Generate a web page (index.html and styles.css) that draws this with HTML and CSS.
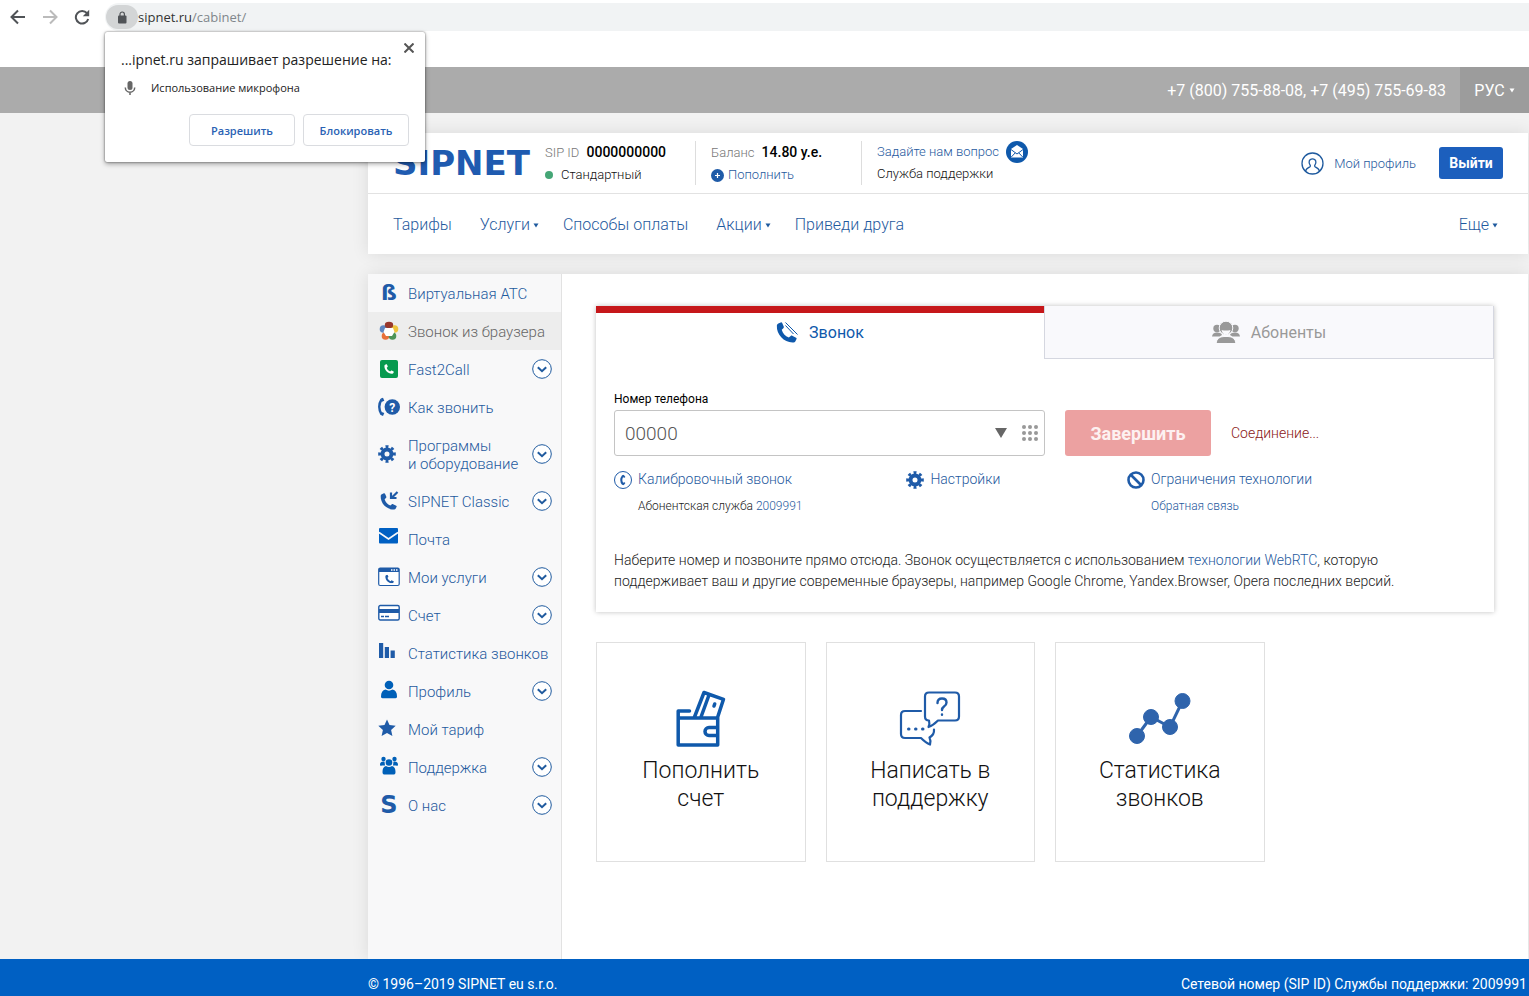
FILE: index.html
```html
<!DOCTYPE html>
<html lang="ru">
<head>
<meta charset="utf-8">
<meta name="viewport" content="width=device-width, initial-scale=1">
<title>SIPNET</title>
<link rel="stylesheet" href="styles.css">
</head>
<body>
<svg class="defs" aria-hidden="true">
  <symbol id="handset" viewBox="0 0 22 22"><path d="M2.4 1.6 5 .4c.7-.2 1.200 0 1.500.6l1.700 4c.2.7 0 1.200-.5 1.600L6 8.200c1 3.800 3.600 6.700 7.400 8.100l2-1.700c.5-.4 1-.5 1.600-.2l4 2c.7.4.8.9.5 1.500l-1.300 2.400c-.4.700-1 1-1.900 1.100C8.800 22 .4 13.500.9 4c.1-1.200.5-1.900 1.500-2.400z" fill="currentColor"/></symbol>
  <symbol id="gear" viewBox="0 0 20 20"><g fill="none" stroke="currentColor"><circle cx="10" cy="10" r="5" stroke-width="4.400"/><circle cx="10" cy="10" r="8.200" stroke-width="3.200" pathLength="16" stroke-dasharray="1 1" stroke-dashoffset=".5"/></g></symbol>
  <symbol id="expand" viewBox="0 0 20 20"><circle cx="10" cy="10" r="9.300" fill="#fff" stroke="currentColor"/><path d="m5.800 8.200 4.200 4 4.200-4" fill="none" stroke="currentColor" stroke-width="2"/></symbol>
  <symbol id="caret" viewBox="0 0 6 5"><path d="M.5.5h5L3 4.500z" fill="currentColor"/></symbol>
</svg>

<div class="browser">
  <div class="browser-nav">
    <button type="button" aria-label="Назад"><svg width="16" height="16" viewBox="0 0 16 16"><path d="M15 8H2M8 1.500 1.500 8 8 14.500" fill="none" stroke="currentColor" stroke-width="2"/></svg></button>
    <button type="button" class="is-off" aria-label="Вперёд"><svg width="16" height="16" viewBox="0 0 16 16"><path d="M1 8h13M8 1.500 14.500 8 8 14.500" fill="none" stroke="currentColor" stroke-width="2"/></svg></button>
    <button type="button" aria-label="Обновить"><svg width="16" height="16" viewBox="0 0 16 16"><path d="M13 4.200A6.300 6.300 0 1 0 14.200 10" fill="none" stroke="currentColor" stroke-width="2"/><path d="M15.200.8v6.400H8.800z" fill="currentColor"/></svg></button>
  </div>
  <div class="address">
    <span class="lock"><svg width="10" height="13" viewBox="0 0 10 13"><rect x="1" y="4.500" width="8.500" height="8" rx="1" fill="currentColor"/><path d="M3 5V3.200a2.200 2.200 0 0 1 4.400 0V5" fill="none" stroke="currentColor" stroke-width="1.200"/></svg></span>
    <span class="host">sipnet.ru</span><span class="path">/cabinet/</span>
  </div>
</div>

<div class="permission" role="dialog" aria-labelledby="perm-title">
  <button type="button" class="permission-close" aria-label="Закрыть"><svg width="10" height="10" viewBox="0 0 10 10"><path d="m.5.5 9 9m0-9-9 9" stroke="currentColor" stroke-width="2"/></svg></button>
  <p class="permission-title" id="perm-title">...ipnet.ru запрашивает разрешение на:</p>
  <p class="permission-item"><svg width="12" height="16" viewBox="0 0 12 16"><rect x="3.500" y="1" width="5" height="9" rx="2.500" fill="currentColor"/><path d="M1.300 7.500a4.700 4.700 0 0 0 9.400 0M6 12v3" fill="none" stroke="currentColor" stroke-width="1.500"/></svg>Использование микрофона</p>
  <div class="permission-actions">
    <button type="button">Разрешить</button>
    <button type="button">Блокировать</button>
  </div>
</div>

<div class="topbar">
  <span class="phones">+7 (800) 755-88-08, +7 (495) 755-69-83</span>
  <button type="button" class="lang">РУС <svg class="caret"><use href="#caret"/></svg></button>
</div>

<div class="page">
  <header class="header">
    <div class="account">
      <a class="logo" href="#">SIPNET</a>
      <div class="info info-id">
        <div><span class="muted">SIP ID</span> <b>0000000000</b></div>
        <div class="plan">Стандартный</div>
      </div>
      <div class="info info-balance">
        <div><span class="muted">Баланс</span> <b>14.80 у.е.</b></div>
        <a class="topup" href="#"><svg width="13" height="13" viewBox="0 0 13 13"><circle cx="6.500" cy="6.500" r="6.500" fill="#1f5ba8"/><path d="M6.500 4v5M4 6.500h5" stroke="#fff" stroke-width="1.200"/></svg>Пополнить</a>
      </div>
      <div class="info info-help">
        <a class="ask" href="#">Задайте нам вопрос<svg width="22" height="22" viewBox="0 0 22 22"><circle cx="11" cy="11" r="11" fill="#0f59ab"/><path d="M5 8 11 4l6 4v8.500H5z" fill="#fff"/><path d="m5 8.500 6 4.500 6-4.500M5 16.300l4.300-4.500m7.700 4.500-4.300-4.500" fill="none" stroke="#0f59ab"/></svg></a>
        <div>Служба поддержки</div>
      </div>
      <a class="profile" href="#"><svg width="23" height="23" viewBox="0 0 23 23" fill="none" stroke="currentColor" stroke-width="1.300"><circle cx="11.500" cy="11.500" r="10.500"/><path d="M4.500 19.200c.5-2 1.700-3.200 4.300-4.300.7-.4.7-1.300.2-2-1.600-2.300-1.200-6 2.500-6s4.100 3.700 2.500 6c-.5.7-.5 1.600.2 2 2.600 1.100 3.800 2.300 4.300 4.300"/></svg>Мой профиль</a>
      <button type="button" class="logout">Выйти</button>
    </div>
    <nav class="menu">
      <a href="#">Тарифы</a>
      <button type="button">Услуги<svg class="caret"><use href="#caret"/></svg></button>
      <a href="#">Способы оплаты</a>
      <button type="button">Акции<svg class="caret"><use href="#caret"/></svg></button>
      <a href="#">Приведи друга</a>
      <button type="button" class="more">Еще<svg class="caret"><use href="#caret"/></svg></button>
    </nav>
  </header>

  <div class="body">
    <nav class="side">
      <a href="#"><span class="icon beta">ß</span>Виртуальная АТС</a>
      <a href="#" class="is-active"><svg class="icon" viewBox="0 0 22 22"><circle cx="5.500" cy="9" r="3.800" fill="#5d86c1"/><circle cx="16.500" cy="9" r="3.800" fill="#eec43c"/><circle cx="7.500" cy="16" r="3.800" fill="#e8703a"/><circle cx="14.500" cy="16" r="3.800" fill="#4d9457"/><ellipse cx="11" cy="5" rx="4.200" ry="3.300" fill="#98382c"/><path d="M7 8h8l1.500 4-2.500 4H8l-2.500-4z" fill="#fff"/></svg>Звонок из браузера</a>
      <a href="#"><svg class="icon" viewBox="0 0 22 22"><rect x="2" y="2" width="18" height="18" rx="2" fill="#079a4f"/><svg x="6" y="6" width="10" height="10" color="#fff"><use href="#handset"/></svg></svg>Fast2Call<svg class="expand"><use href="#expand"/></svg></a>
      <a href="#"><svg class="icon" viewBox="0 0 22 22"><path d="M3.500 3.500Q-1 10.500 3.500 18.500" fill="none" stroke="#1f5ba8" stroke-width="2.400"/><path d="m2.800 2.600 2.200-.8 1.300 3-2.300 1M2.800 19l2.200 1 1.300-3-2.600-1" fill="#1f5ba8"/><circle cx="14.300" cy="11" r="7.700" fill="#1f5ba8"/><text x="14.300" y="15.500" text-anchor="middle" class="glyph">?</text></svg>Как звонить</a>
      <a href="#"><svg class="icon" viewBox="1 0 22 22"><svg x="1" y="2" width="18" height="18"><use href="#gear"/></svg></svg>Программы<br>и оборудование<svg class="expand"><use href="#expand"/></svg></a>
      <a href="#"><svg class="icon" viewBox="0 0 22 22"><svg x="2" y="3" width="17" height="17"><use href="#handset"/></svg><path d="M19.500 2 14 7.500M13 2.500V8h5.500" fill="none" stroke="currentColor" stroke-width="2.200"/></svg>SIPNET Classic<svg class="expand"><use href="#expand"/></svg></a>
      <a href="#"><svg class="icon" viewBox="0 0 22 22"><rect x="1" y="0" width="19" height="15.500" rx="1" fill="#0060c3"/><path d="m1 4.500 9.500 6.500L20 4.500" fill="none" stroke="#f8f8f9" stroke-width="1.600"/></svg>Почта</a>
      <a href="#"><svg class="icon" viewBox="0 0 22 22"><rect x=".7" y="2" width="20.500" height="17.500" rx="1.500" fill="#fff" stroke="currentColor" stroke-width="1.200"/><path d="M1 2h20v4H1z" fill="currentColor"/><path d="M13 4h1.500m1 0H17m1 0h1.500" stroke="#fff" stroke-width="1.500"/><svg x="7" y="8.500" width="9" height="9"><use href="#handset"/></svg></svg>Мои услуги<svg class="expand"><use href="#expand"/></svg></a>
      <a href="#"><svg class="icon" viewBox="0 0 22 22"><rect x=".8" y="1.500" width="20.400" height="14.500" rx="1.500" fill="#fff" stroke="currentColor" stroke-width="1.400"/><path d="M1 5h20v4H1z" fill="currentColor"/><path d="M3 12.500h3m1 0h4" stroke="currentColor" stroke-width="1.400"/></svg>Счет<svg class="expand"><use href="#expand"/></svg></a>
      <a href="#"><svg class="icon" viewBox="0 0 22 22"><path d="M1 1h4.200v15H1zM6.800 5H11v11H6.800zM12.600 8.500h4.200V16h-4.200z" fill="currentColor"/></svg>Статистика звонков</a>
      <a href="#"><svg class="icon" viewBox="0 0 22 22"><circle cx="11" cy="5" r="4.300" fill="#0060b8"/><path d="M3 16.500c0-4 1.500-6.500 4.500-7q3.500 2.300 7 0c3 .5 4.500 3 4.500 7 0 1-.5 1.700-1.500 1.700h-13c-1 0-1.500-.7-1.500-1.700z" fill="#0060b8"/></svg>Профиль<svg class="expand"><use href="#expand"/></svg></a>
      <a href="#"><svg class="icon" viewBox="0 0 22 22"><path d="m9 1.500 2.500 5.600 6.200.7-4.600 4.100 1.300 6.100L9 14.900 3.600 18l1.300-6.100L.3 7.800l6.200-.7z" fill="currentColor"/></svg>Мой тариф</a>
      <a href="#"><svg class="icon" viewBox="0 0 22 22" fill="#0060b8"><circle cx="5.500" cy="3" r="2.200"/><circle cx="16.500" cy="3" r="2.200"/><path d="M2 9c0-3 1.500-4 4.500-3.500L7 9.500H4C2.500 10 2 9.800 2 9zM20 9c0-3-1.500-4-4.500-3.500l-.5 4h3c1.500.5 2 .3 2-.5z"/><circle cx="11" cy="6.500" r="3.300"/><path d="M4.500 16c0-3.500 1-5.500 3.500-6q3 2 6 0c2.500.5 3.500 2.500 3.500 6 0 1.500-.5 2.500-1.500 2.500H6c-1 0-1.500-1-1.500-2.500z"/></svg>Поддержка<svg class="expand"><use href="#expand"/></svg></a>
      <a href="#"><span class="icon letter">S</span>О нас<svg class="expand"><use href="#expand"/></svg></a>
    </nav>

    <main class="content">
      <section class="call">
        <div class="tabs" role="tablist">
          <button type="button" role="tab" aria-selected="true" class="tab is-current"><svg width="22" height="22" viewBox="0 0 22 22"><svg width="21" height="21"><use href="#handset"/></svg><path d="m9.500 3.500 8 8.500M9.500.5l12 12" stroke="currentColor"/></svg>Звонок</button>
          <button type="button" role="tab" aria-selected="false" class="tab"><svg width="28" height="22" viewBox="0 0 28 22" fill="currentColor"><circle cx="5" cy="7.500" r="3.700"/><circle cx="23" cy="7.500" r="3.700"/><path d="M0 15.500q.5-4 5-4t5 2.500l-2.500 1.500zM28 15.500q-.5-4-5-4t-5 2.500l2.500 1.500z"/><circle cx="14" cy="7" r="6.800" stroke="#f9f9fc"/><path d="M4 22.500q1-7 8-7h4q7 0 8 7z" stroke="#f9f9fc"/><path d="M9.500 9q4.500 1 9 0-1 4.500-4.500 4.500T9.500 9z" fill="#f9f9fc"/></svg>Абоненты</button>
        </div>
        <div class="call-body">
          <label class="field-label" for="number">Номер телефона</label>
          <div class="dial">
            <div class="field">
              <input id="number" type="text" value="00000">
              <button type="button" aria-label="Список номеров"><svg width="12" height="10" viewBox="0 0 12 10"><path d="M0 0h12L6 10z" fill="#666"/></svg></button>
              <button type="button" aria-label="Клавиатура"><svg width="16" height="16" viewBox="0 0 16 16" fill="#999"><circle cx="2" cy="2" r="2"/><circle cx="8" cy="2" r="2"/><circle cx="14" cy="2" r="2"/><circle cx="2" cy="8" r="2"/><circle cx="8" cy="8" r="2"/><circle cx="14" cy="8" r="2"/><circle cx="2" cy="14" r="2"/><circle cx="8" cy="14" r="2"/><circle cx="14" cy="14" r="2"/></svg></button>
            </div>
            <button type="button" class="hangup">Завершить</button>
            <span class="status">Соединение...</span>
          </div>
          <div class="tools">
            <div class="tool">
              <svg class="tool-icon" viewBox="0 0 18 18" fill="none" stroke="currentColor"><circle cx="9" cy="9" r="8.500"/><path d="M9 4.500Q5.500 9 9 13.500" stroke-width="2"/><path d="m9 4.200 1.700 2.300M9 13.800l1.700-2.300" stroke-width="1.800"/></svg>
              <div><a href="#">Калибровочный звонок</a><p>Абонентская служба <a href="#">2009991</a></p></div>
            </div>
            <div class="tool">
              <svg class="tool-icon"><use href="#gear"/></svg>
              <div><a href="#">Настройки</a></div>
            </div>
            <div class="tool">
              <svg class="tool-icon" viewBox="0 0 18 18" fill="none" stroke="currentColor" stroke-width="2.600"><circle cx="9" cy="9" r="7.500"/><path d="m4 4 10 10"/></svg>
              <div><a href="#">Ограничения технологии</a><p><a href="#">Обратная связь</a></p></div>
            </div>
          </div>
          <p class="hint">Наберите номер и позвоните прямо отсюда. Звонок осуществляется с использованием <a href="#">технологии WebRTC</a>, которую поддерживает ваш и другие современные браузеры, например Google Chrome, Yandex.Browser, Opera последних версий.</p>
        </div>
      </section>

      <div class="cards">
        <a class="card" href="#"><svg width="62" height="58" viewBox="0 0 62 58" fill="none" stroke="#0f59ab" stroke-width="3.500" stroke-linejoin="round" stroke-linecap="round"><path d="M19.500 21H8.200v34h39.500V28H8.200M24.500 27 34 2.500l19.500 6.800L47.700 27v5M31 27l8-22"/><path d="M47 37.500h-8a4 4 0 0 0 0 8h8"/><path d="m44.700 14-.7 2"/></svg><span>Пополнить<br>счет</span></a>
        <a class="card" href="#"><svg width="62" height="58" viewBox="0 0 62 58" fill="none" stroke="#1f5ba8" stroke-width="2.200" stroke-linecap="round" stroke-linejoin="round"><path d="M22 21H6q-4 0-4 4v19q0 4 4 4h16q5 5 9 6.500 1-4-.5-7 5-3 4.500-8"/><path d="M30 2.500h26q4 0 4 4v20q0 4-4 4H39q-5 5-9.500 6.500 1.500-3 .5-6.500-4 0-4-4v-20q0-4 4-4z"/><path d="M9.500 39h.5m6.500 0h.5m6.500 0h.5" stroke-width="3"/><path d="M38.500 13q0-4.500 4.500-4.500t4.500 4q0 2.500-2.500 4-2 1.500-2 3.500m0 4.500v.3" stroke-width="2.400"/></svg><span>Написать в<br>поддержку</span></a>
        <a class="card" href="#"><svg width="62" height="58" viewBox="0 0 62 58" fill="#2f64ac" stroke="#2f64ac"><path d="m8 46 14-19 19 10 12.500-26" fill="none" stroke-width="3"/><circle cx="8" cy="46" r="7.500"/><circle cx="22" cy="27" r="7.500"/><circle cx="41" cy="37" r="7.500"/><circle cx="53.500" cy="11" r="7.500"/></svg><span>Статистика<br>звонков</span></a>
      </div>
    </main>
  </div>
</div>

<footer class="footer">
  <span>© 1996–2019 SIPNET eu s.r.o.</span>
  <span>Сетевой номер (SIP ID) Службы поддержки: 2009991</span>
</footer>
</body>
</html>
```

FILE: styles.css
```css
* { box-sizing: border-box; }

body {
  margin: 0;
  min-height: 100vh;
  display: flex;
  flex-direction: column;
  position: relative;
  background: #f2f2f2;
  color: #222;
  font-family: Roboto, "Liberation Sans", sans-serif;
  font-weight: 300;
  font-size: 14px;
}

a { color: #1f5a9e; text-decoration: none; }
p { margin: 0; }
button {
  margin: 0;
  padding: 0;
  border: 0;
  background: none;
  color: inherit;
  font: inherit;
  cursor: pointer;
}
svg { flex: none; }
.defs { position: absolute; width: 0; height: 0; }
.caret { width: 6px; height: 5px; margin-top: 2px; }

/* Browser chrome */
.browser {
  display: flex;
  height: 67px;
  padding-top: 3px;
  background: #fff;
  font-family: "Open Sans", "Noto Sans", sans-serif;
  font-weight: 400;
  font-size: 13px;
}
.browser-nav {
  display: flex;
  align-items: center;
  gap: 16px;
  height: 28px;
  padding: 0 15px 0 10px;
  color: #505357;
}
.browser-nav button { display: flex; }
.browser-nav .is-off { color: #bbb; }
.address {
  flex: 1;
  display: flex;
  align-items: center;
  height: 28px;
  background: #f1f3f4;
  border-radius: 14px 0 0 14px;
}
.lock {
  display: flex;
  align-items: center;
  justify-content: center;
  width: 32px;
  height: 24px;
  margin-left: 1px;
  border-radius: 12px;
  background: #d3d5d6;
  color: #505357;
}
.host { color: #333; }
.path { color: #80868b; }

/* Permission bubble */
.permission {
  position: absolute;
  z-index: 2;
  left: 105px;
  top: 32px;
  width: 320px;
  padding: 18px 16px 16px;
  border-radius: 2px;
  background: #fff;
  box-shadow: 0 0 2px rgba(0, 0, 0, .6), 0 2px 5px rgba(0, 0, 0, .35);
  font-family: "Open Sans", "Noto Sans", sans-serif;
  font-weight: 400;
}
.permission-close {
  position: absolute;
  top: 11px;
  right: 11px;
  display: flex;
  color: #555;
}
.permission-title { font-size: 14px; line-height: 20px; white-space: nowrap; }
.permission-item {
  display: flex;
  align-items: center;
  gap: 15px;
  padding: 10px 3px 18px;
  font-size: 11px;
  line-height: 16px;
}
.permission-item svg { color: #666; }
.permission-actions { display: flex; justify-content: flex-end; gap: 8px; }
.permission-actions button {
  width: 106px;
  height: 32px;
  border: 1px solid #dadce0;
  border-radius: 4px;
  color: #2a62b4;
  font-size: 11px;
  font-weight: 600;
}

/* Grey bar with phones */
.topbar {
  display: flex;
  justify-content: flex-end;
  align-items: center;
  gap: 14px;
  height: 46px;
  background: #ababab;
  color: #fff;
  font-size: 16px;
  font-weight: 400;
}
.lang {
  display: flex;
  align-items: center;
  justify-content: center;
  gap: 4px;
  align-self: stretch;
  width: 69px;
  background: #9c9c9c;
}
.lang .caret { margin-top: 0; }

.page {
  flex: 1;
  display: flex;
  flex-direction: column;
  gap: 20px;
  margin: 20px 1px 0 368px;
}

/* Header */
.header { background: #fff; box-shadow: 0 0 16px rgba(0, 0, 0, .1); }
.account {
  display: flex;
  align-items: center;
  height: 61px;
  padding: 0 25px;
  border-bottom: 1px solid #e2e2e2;
}
.logo {
  width: 152px;
  color: #1f5bb0;
  font: 700 34px "DejaVu Sans", sans-serif;
}
.info {
  height: 44px;
  line-height: 22px;
  font-size: 13px;
  color: #111;
  white-space: nowrap;
}
.info b { margin-left: 4px; font-size: 14px; font-weight: 500; color: #000; }
.info-id { width: 151px; border-right: 1px solid #ddd; }
.info-balance { width: 166px; padding-left: 15px; border-right: 1px solid #ddd; }
.info-help { padding-left: 15px; }
.muted { color: #777; }
.plan { display: flex; align-items: center; gap: 8px; }
.plan::before {
  content: "";
  width: 8px;
  height: 8px;
  border-radius: 50%;
  background: #45a676;
}
.topup { display: flex; align-items: center; gap: 4px; }
.ask { display: flex; align-items: center; gap: 7px; height: 22px; }
.profile {
  display: flex;
  align-items: center;
  gap: 10px;
  margin-left: auto;
  font-size: 13px;
}
.logout {
  width: 64px;
  height: 32px;
  margin-left: 23px;
  border-radius: 3px;
  background: #1c5fbd;
  color: #fff;
  font-size: 14px;
  font-weight: 700;
}
.menu {
  display: flex;
  align-items: center;
  gap: 28px;
  height: 60px;
  padding: 0 34px 0 25px;
  color: #1f5a9e;
  font-size: 16px;
}
.menu button {
  display: flex;
  align-items: center;
  gap: 3px;
  margin-right: -4px;
}
.menu .more { margin-left: auto; }

/* Main area */
.body {
  flex: 1;
  display: flex;
  background: #fff;
  box-shadow: 0 0 16px rgba(0, 0, 0, .1);
}
.side {
  flex: none;
  width: 194px;
  background: #f8f8f9;
  border-right: 1px solid #e2e2e2;
  color: #1f5ba8;
}
.side a {
  display: block;
  position: relative;
  padding: 11px 0 9px 40px;
  font-size: 15px;
  line-height: 18px;
  white-space: nowrap;
}
.side .is-active { background: #ededed; color: #666; }
.icon {
  position: absolute;
  left: 10px;
  top: 0;
  bottom: 0;
  width: 22px;
  height: 22px;
  margin: auto 0;
  color: #1f5ba8;
}
.beta, .letter {
  font: 700 22px/22px "DejaVu Sans", sans-serif;
  text-align: center;
}
.letter { font-size: 24px; }
.glyph { font: 700 12px Roboto, sans-serif; fill: #fff; }
.expand {
  position: absolute;
  right: 9px;
  top: 0;
  bottom: 0;
  width: 20px;
  height: 20px;
  margin: auto 0;
}
.content { flex: 1; min-width: 0; padding: 32px 34px; }

/* Call panel */
.call { background: #fff; box-shadow: 0 0 5px rgba(0, 0, 0, .25); }
.tabs { display: flex; height: 53px; }
.tab {
  flex: 1;
  display: flex;
  align-items: center;
  justify-content: center;
  gap: 11px;
  border: 1px solid #d5d7e0;
  border-top: 0;
  background: #f9f9fc;
  color: #999;
  font-size: 16px;
  font-weight: 400;
}
.tab.is-current {
  border: 0;
  border-top: 7px solid #c6171a;
  padding-bottom: 7px;
  background: #fff;
  color: #0f59ab;
}
.call-body { padding: 32px 18px 20px; }
.field-label {
  display: block;
  margin-bottom: 3px;
  color: #000;
  font-size: 12px;
  font-weight: 400;
  line-height: 16px;
}
.dial { display: flex; align-items: center; gap: 20px; }
.field {
  display: flex;
  align-items: center;
  gap: 15px;
  width: 50%;
  height: 46px;
  padding-right: 6px;
  border: 1px solid #c4c4c4;
  border-radius: 3px;
}
.field input {
  flex: 1;
  min-width: 0;
  padding: 0 10px;
  border: 0;
  background: none;
  color: #555;
  font: 300 19px Roboto, sans-serif;
}
.field button { display: flex; }
.hangup {
  width: 146px;
  height: 46px;
  border-radius: 3px;
  background: #eca1a1;
  color: #fdf1f1;
  font-size: 18px;
  font-weight: 700;
}
.status { color: #8a1616; }
.tools {
  display: grid;
  grid-template-columns: 57fr 43fr 68fr;
  margin-top: 12px;
}
.tool {
  display: flex;
  gap: 6px;
  font-size: 14px;
  line-height: 22px;
}
.tool-icon { width: 18px; height: 18px; margin-top: 3px; color: #1f5ba8; }
.tool p { margin-top: 6px; font-size: 12px; line-height: 20px; }
.hint { max-width: 800px; margin-top: 34px; line-height: 21px; }

/* Shortcut cards */
.cards {
  display: grid;
  grid-template-columns: repeat(4, 1fr);
  gap: 20px;
  margin-top: 30px;
}
.card {
  display: flex;
  flex-direction: column;
  align-items: center;
  gap: 9px;
  height: 220px;
  padding-top: 47px;
  border: 1px solid #e0e0e0;
  color: #111;
  font-size: 23px;
  line-height: 28px;
  text-align: center;
}

.footer {
  display: flex;
  justify-content: space-between;
  padding: 16px 2px 3px 368px;
  background: #0060c3;
  color: #fff;
  font-size: 14px;
  font-weight: 400;
  line-height: 18px;
}
```
